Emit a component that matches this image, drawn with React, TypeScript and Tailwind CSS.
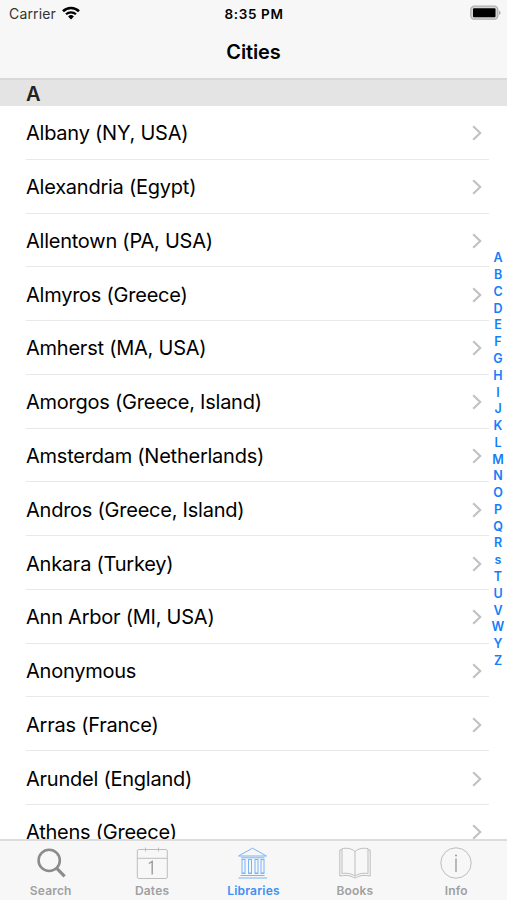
import type { ReactNode } from "react";
import clsx from "clsx";

const cities = [
	"Albany (NY, USA)",
	"Alexandria (Egypt)",
	"Allentown (PA, USA)",
	"Almyros (Greece)",
	"Amherst (MA, USA)",
	"Amorgos (Greece, Island)",
	"Amsterdam (Netherlands)",
	"Andros (Greece, Island)",
	"Ankara (Turkey)",
	"Ann Arbor (MI, USA)",
	"Anonymous",
	"Arras (France)",
	"Arundel (England)",
	"Athens (Greece)",
];

const letters = "ABCDEFGHIJKLMNOPQRsTUVWYZ".split("");

function Icon({ children }: { children: ReactNode }) {
	return (
		<svg
			viewBox="0 0 32 32"
			className="size-8"
			fill="none"
			stroke="currentColor"
			strokeWidth="1"
		>
			{children}
		</svg>
	);
}

const tabs = [
	{
		label: "Search",
		icon: (
			<Icon>
				<circle cx="14.2" cy="13.4" r="10.6" stroke="#8c8c8c" strokeWidth="2.6" />
				<path d="M21.8 21.3l7.8 8" stroke="#8c8c8c" strokeWidth="3.2" />
			</Icon>
		),
	},
	{
		label: "Dates",
		icon: (
			<Icon>
				<rect x="1.3" y="2.5" width="30" height="29" rx="1.5" />
				<path d="M1.3 11.3h30M9.5 .5v4M22.5 .5v4" />
				<path d="M12.8 16.5l3.4-2.1v13.2" stroke="#999" strokeWidth="1.4" />
			</Icon>
		),
	},
	{
		label: "Libraries",
		active: true,
		icon: (
			<Icon>
				<path d="M1.5 9L15.5 1.2 29.500 9zM4 10.8h23.5M3.5 28.5h24M1.5 31h28.5" />
				<path d="M4.5 12.5h4M11 12.5h4M17.5 12.5h4M23.5 12.5h4M4.5 26.5h4M11 26.5h4M17.5 26.5h4M23.5 26.5h4" />
				<path d="M5 13v13h3V13M11.5 13v13h3V13M18 13v13h3V13M24 13v13h3V13" />
			</Icon>
		),
	},
	{
		label: "Books",
		icon: (
			<Icon>
				<path d="M16 4.5C12.5 1.2 7 .8 3 1.6v25c4-.8 9.5-.3 13 2.6 3.5-2.9 9-3.4 13-2.6v-25C25 .8 19.5 1.2 16 4.5zM16 4.5v24.7" />
				<path d="M3 3H.8v26c5-.8 9.5-1 12.4.8 1.6 1.4 4 1.4 5.6 0 2.9-1.800 7.400-1.600 12.400-.8V3H29" />
			</Icon>
		),
	},
	{
		label: "Info",
		icon: (
			<Icon>
				<circle cx="16" cy="16" r="15.2" />
				<path d="M16 11.5V25" stroke="#999" strokeWidth="1.3" />
				<circle cx="16" cy="8.5" r="1" fill="#999" stroke="none" />
			</Icon>
		),
	},
];

function StatusBar() {
	return (
		<div className="grid h-7 grid-cols-3 items-center pr-[6px] pl-[9px] text-[13.5px]">
			<div className="flex items-center gap-[6px]">
				<span className="text-[14px] leading-4 tracking-[0.15px] text-[#333]">
					Carrier
				</span>
				<svg
					viewBox="0 0 18 14"
					className="h-[14px] w-[18px] -translate-y-px"
					fill="none"
					stroke="#000"
				>
					<path d="M1 5.2a11.5 11.5 0 0 1 16 0" strokeWidth="2.6" />
					<path d="M4 8.3a7.3 7.3 0 0 1 10 0" strokeWidth="2.2" />
					<path d="M9 13.4l-2.9-3a4.3 4.3 0 0 1 5.8 0z" fill="#000" stroke="none" />
				</svg>
			</div>
			<span className="-translate-x-px text-center font-semibold tracking-[0.65px]">
				8:35 PM
			</span>
			<svg
				viewBox="0 0 31 16"
				className="h-4 w-[31px] -translate-y-px justify-self-end"
			>
				<rect x=".8" y="1.2" width="27" height="13" rx="3.5" fill="#d4d4d4" stroke="#b0b0b0" strokeWidth="1.3" />
				<rect x="3" y="3.2" width="22.5" height="9" rx="1" fill="#000" />
				<path d="M29 5.5c2 .8 2 3.7 0 4.5z" fill="#aaa" />
			</svg>
		</div>
	);
}

function CityRow({ name }: { name: string }) {
	return (
		<li className="ml-[26px] flex h-[53.77px] shrink-0 items-center justify-between border-b border-[#e8e8e8] pt-[2px] pr-[7px]">
			<span className="text-[20px] tracking-[-0.24px]">{name}</span>
			<svg
				viewBox="0 0 10 16"
				className="h-4 w-[10px]"
				fill="none"
				stroke="#c2c2c5"
				strokeWidth="2.2"
			>
				<path d="M1.2 1.2L8.2 8l-7 6.8" />
			</svg>
		</li>
	);
}

export default function App() {
	return (
		<div className="flex h-[900px] w-[507px] flex-col overflow-hidden bg-white font-['Inter',sans-serif] text-black">
			<header className="h-[78px] shrink-0 bg-[#f7f7f7]">
				<StatusBar />
				<h1 className="text-center text-[20px] leading-[49px] font-semibold tracking-[-0.1px]">
					Cities
				</h1>
			</header>
			<h2 className="h-[28px] shrink-0 border-t-2 border-[#d8d8d8] bg-[#e4e4e4] pl-[26px] text-[20px] leading-[29px] font-semibold text-[#222]">
				A
			</h2>

			<main className="flex min-h-0 flex-1">
				<ul className="flex flex-1 flex-col overflow-hidden">
					{cities.map((city) => (
						<CityRow key={city} name={city} />
					))}
				</ul>
				<nav className="flex w-[18px] flex-col items-center justify-center pb-[25px] text-[12.5px] font-semibold text-[#147efb]">
					{letters.map((letter) => (
						<span key={letter} className="h-[16.77px] leading-[16.77px]">
							{letter}
						</span>
					))}
				</nav>
			</main>

			{/* Tab bar */}
			<nav className="grid h-[61px] shrink-0 grid-cols-5 border-t-2 border-[#dcdcdc] bg-[#f7f7f7]">
				{tabs.map((tab) => (
					<div
						key={tab.label}
						className={clsx(
							"flex flex-col items-center pt-[6px]",
							tab.active ? "text-[#78b4f7]" : "text-[#bdbdbd]",
						)}
					>
						{tab.icon}
						<span
							className={clsx(
								"mt-1 text-[12px] leading-[16px] font-semibold tracking-[0.2px]",
								tab.active ? "text-[#3c91f5]" : "text-[#a0a0a0]",
							)}
						>
							{tab.label}
						</span>
					</div>
				))}
			</nav>
		</div>
	);
}
